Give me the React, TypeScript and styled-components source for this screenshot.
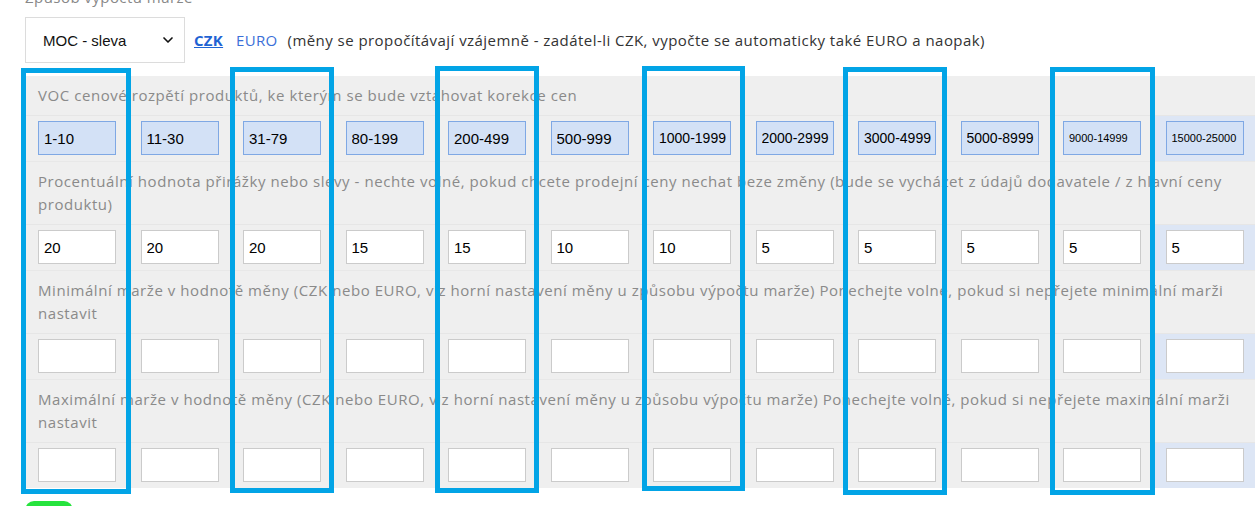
import styled, { createGlobalStyle } from "styled-components";
import { ChevronDown } from "lucide-react";

const GlobalStyle = createGlobalStyle`
  html, body {
    margin: 0;
    padding: 0;
    background: #fff;
    overflow: hidden;
  }
  body {
    font-family: "Open Sans", "Liberation Sans", sans-serif;
  }
`;

const Page = styled.div`
  width: 1255px;
  padding-left: 25px;
  margin-top: -14px;
  box-sizing: border-box;
`;

const SectionTitle = styled.div`
  font-size: 15px;
  line-height: 23px;
  letter-spacing: 0.45px;
  color: #888;
  margin-bottom: 8px;
`;

const Toolbar = styled.div`
  display: flex;
  align-items: center;
  height: 46px;
`;

const SelectWrap = styled.div`
  position: relative;
  width: 160px;
  height: 46px;
  margin-right: 9px;
  svg {
    position: absolute;
    right: 9px;
    top: 15px;
    pointer-events: none;
  }
`;

const Select = styled.select`
  appearance: none;
  width: 100%;
  height: 100%;
  box-sizing: border-box;
  border: 1px solid #dcdcdc;
  background: #fff;
  padding: 0 0 0 17px;
  font-family: "Liberation Sans", Arial, sans-serif;
  font-size: 15px;
  color: #111;
  outline: none;
`;

const CurrencyLink = styled.a<{ $active?: boolean }>`
  font-size: 15px;
  letter-spacing: 0.3px;
  color: ${(p) => (p.$active ? "#1f63d3" : "#3a6fd8")};
  font-weight: ${(p) => (p.$active ? 700 : 400)};
  text-decoration: ${(p) => (p.$active ? "underline" : "none")};
  margin-right: ${(p) => (p.$active ? "13px" : "10px")};
  cursor: pointer;
`;

const Note = styled.span`
  font-size: 15px;
  letter-spacing: 0.45px;
  color: #333;
`;

const Table = styled.div`
  position: relative;
  margin: 13px 0 0 1px;
  display: grid;
  grid-template-columns: repeat(12, 102.5px);
  background: #efefef;
`;

const LabelCell = styled.div`
  grid-column: 1 / -1;
  padding: 8px 12px 8px 12px;
  font-size: 15px;
  line-height: 23px;
  letter-spacing: 0.56px;
  color: #8a8a8a;
  border-top: 1px solid #e8e8e8;
  &:first-child {
    border-top: none;
  }
`;

const InputCell = styled.div<{ $highlight?: boolean }>`
  padding: 5px 12.5px 6px 12px;
  border-top: 1px solid #e6e6e6;
  background: ${(p) => (p.$highlight ? "#dde6f5" : "transparent")};
`;

const Field = styled.input<{ $range?: boolean; $size?: number }>`
  display: block;
  width: 78px;
  height: 34px;
  box-sizing: border-box;
  padding: 0 0 0 5px;
  border: 1px solid ${(p) => (p.$range ? "#7fa8e4" : "#cbcbcb")};
  background: ${(p) => (p.$range ? "#d3e1f6" : "#fff")};
  font-family: "Liberation Sans", Arial, sans-serif;
  font-size: ${(p) => p.$size ?? 15}px;
  color: #000;
  outline: none;
`;

const Marker = styled.div<{ $x: number; $y: number; $w: number; $h: number }>`
  position: absolute;
  left: ${(p) => p.$x}px;
  top: ${(p) => p.$y}px;
  width: ${(p) => p.$w}px;
  height: ${(p) => p.$h}px;
  box-sizing: border-box;
  border: 5px solid #02a4e6;
  pointer-events: none;
`;

const SaveButton = styled.button`
  display: block;
  margin-top: 13px;
  width: 48px;
  height: 30px;
  border: none;
  border-radius: 9px;
  background: #26e33d;
`;

const ranges = [
  "1-10", "11-30", "31-79", "80-199", "200-499", "500-999",
  "1000-1999", "2000-2999", "3000-4999", "5000-8999", "9000-14999", "15000-25000",
];
const percents = ["20", "20", "20", "15", "15", "10", "10", "5", "5", "5", "5", "5"];

const markers = [
  { x: -5, y: -8, w: 110, h: 426 },
  { x: 204, y: -9, w: 104, h: 426 },
  { x: 409, y: -10, w: 104, h: 427 },
  { x: 616, y: -10, w: 103, h: 425 },
  { x: 817, y: -9, w: 104, h: 428 },
  { x: 1024, y: -9, w: 105, h: 428 },
];

const sizeFor = (v: string) => (v.length >= 10 ? 11 : v.length >= 9 ? 14 : 15);

function InputRow({ values, range }: { values: string[]; range?: boolean }) {
  return (
    <>
      {values.map((v, i) => (
        <InputCell key={i} $highlight={i === values.length - 1}>
          <Field $range={range} $size={range ? sizeFor(v) : 15} defaultValue={v} readOnly={range} />
        </InputCell>
      ))}
    </>
  );
}

export default function App() {
  const empty = Array(12).fill("");
  return (
    <>
      <GlobalStyle />
      <Page>
        <SectionTitle>Způsob výpočtu marže</SectionTitle>
        <Toolbar>
          <SelectWrap>
            <Select defaultValue="moc-sleva">
              <option value="moc-sleva">MOC - sleva</option>
              <option value="voc-prirazka">VOC - přirážka</option>
            </Select>
            <ChevronDown size={16} strokeWidth={2.5} color="#111" />
          </SelectWrap>
          <CurrencyLink $active>CZK</CurrencyLink>
          <CurrencyLink>EURO</CurrencyLink>
          <Note>(měny se propočítávají vzájemně - zadátel-li CZK, vypočte se automaticky také EURO a naopak)</Note>
        </Toolbar>
        <Table>
          <LabelCell>VOC cenové rozpětí produktů, ke kterým se bude vztahovat korekce cen</LabelCell>
          <InputRow values={ranges} range />
          <LabelCell>
            Procentuální hodnota přirážky nebo slevy - nechte volné, pokud chcete prodejní ceny nechat beze změny (bude se vycházet z údajů dodavatele / z hlavní ceny produktu)
          </LabelCell>
          <InputRow values={percents} />
          <LabelCell>
            Minimální marže v hodnotě měny (CZK nebo EURO, viz horní nastavení měny u způsobu výpočtu marže) Ponechejte volné, pokud si nepřejete minimální marži nastavit
          </LabelCell>
          <InputRow values={empty} />
          <LabelCell>
            Maximální marže v hodnotě měny (CZK nebo EURO, viz horní nastavení měny u způsobu výpočtu marže) Ponechejte volné, pokud si nepřejete maximální marži nastavit
          </LabelCell>
          <InputRow values={empty} />
          {markers.map((m, i) => (
            <Marker key={i} $x={m.x} $y={m.y} $w={m.w} $h={m.h} />
          ))}
        </Table>
        <SaveButton aria-label="Uložit" />
      </Page>
    </>
  );
}
